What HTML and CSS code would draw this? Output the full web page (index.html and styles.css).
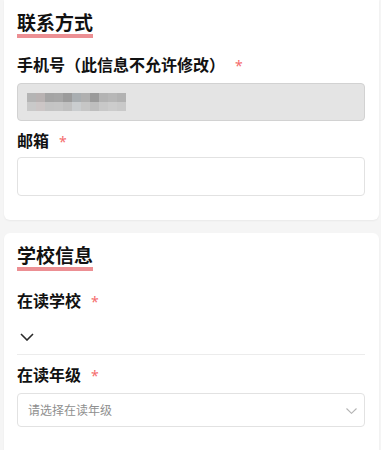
FILE: index.html
```html
<!DOCTYPE html>
<html lang="zh-CN">
<head>
<meta charset="utf-8">
<title>联系方式</title>
<link rel="stylesheet" href="styles.css">
</head>
<body>
<section class="card card-first">
  <h2 class="section-title">联系方式</h2>
  <div class="field field-phone">
    <div class="label">手机号（此信息不允许修改）<span class="req">*</span></div>
    <div class="input input-disabled">
      <svg class="mosaic" width="99" height="18" viewBox="0 0 99 18">
        <rect x="0" y="0" width="9" height="9" fill="#b4b4b4"/>
        <rect x="9" y="0" width="9" height="9" fill="#b8b2b2"/>
        <rect x="18" y="0" width="9" height="9" fill="#a4a4a4"/>
        <rect x="27" y="0" width="9" height="9" fill="#a6a6a6"/>
        <rect x="36" y="0" width="9" height="9" fill="#9b9b9b"/>
        <rect x="45" y="0" width="9" height="9" fill="#a9aeb1"/>
        <rect x="54" y="0" width="9" height="9" fill="#b0b0b0"/>
        <rect x="63" y="0" width="9" height="9" fill="#9a9a9a"/>
        <rect x="72" y="0" width="9" height="9" fill="#b3b3b3"/>
        <rect x="81" y="0" width="9" height="9" fill="#b7b7b7"/>
        <rect x="90" y="0" width="9" height="9" fill="#b2b2b2"/>
        <rect x="0" y="9" width="9" height="9" fill="#c9c9c9"/>
        <rect x="9" y="9" width="9" height="9" fill="#ccc6c6"/>
        <rect x="18" y="9" width="9" height="9" fill="#c4c4c4"/>
        <rect x="27" y="9" width="9" height="9" fill="#c5c5c5"/>
        <rect x="36" y="9" width="9" height="9" fill="#c0c0c0"/>
        <rect x="45" y="9" width="9" height="9" fill="#cacdcf"/>
        <rect x="54" y="9" width="9" height="9" fill="#c6c6c6"/>
        <rect x="63" y="9" width="9" height="9" fill="#bebebe"/>
        <rect x="72" y="9" width="9" height="9" fill="#c8c8c8"/>
        <rect x="81" y="9" width="9" height="9" fill="#cccccc"/>
        <rect x="90" y="9" width="9" height="9" fill="#c9c9c9"/>
      </svg>
    </div>
  </div>
  <div class="field field-email">
    <div class="label">邮箱<span class="req">*</span></div>
    <div class="input input-email"></div>
  </div>
</section>

<section class="card card-second">
  <h2 class="section-title">学校信息</h2>
  <div class="field field-school">
    <div class="label">在读学校<span class="req">*</span></div>
    <div class="picker-row">
      <svg class="chev-dark" width="14" height="8" viewBox="0 0 14 8"><path d="M1 1 L7 7 L13 1" fill="none" stroke="#2b2b2b" stroke-width="1.6"/></svg>
    </div>
  </div>
  <div class="field field-grade">
    <div class="label">在读年级<span class="req">*</span></div>
    <div class="select">
      <span class="placeholder">请选择在读年级</span>
      <svg class="chev-light" width="11" height="6" viewBox="0 0 11 6"><path d="M0.5 0.5 L5.5 5.3 L10.5 0.5" fill="none" stroke="#b4b4b4" stroke-width="1.1"/></svg>
    </div>
  </div>
</section>
</body>
</html>
```

FILE: styles.css
```css
html, body {
  margin: 0;
  padding: 0;
}
body {
  background: #f5f5f5;
  font-family: "Noto Sans CJK SC", "Noto Sans", sans-serif;
  color: #111;
}
.card {
  background: #fff;
  margin: 0 2px 0 4px;
  padding: 11px 14px 24px 13px;
  border-radius: 6px;
  box-shadow: 0 1px 2px rgba(0, 0, 0, 0.05);
}
.card-first {
  border-top-left-radius: 0;
  border-top-right-radius: 0;
}
.card-second {
  margin-top: 13px;
  padding-bottom: 40px;
}
.section-title {
  display: inline-block;
  margin: 0;
  font-size: 19px;
  line-height: 22px;
  font-weight: 700;
  padding-bottom: 1px;
  border-bottom: 4px solid #ec8f93;
}
.field {
  display: flex;
  flex-direction: column;
}
.label {
  font-size: 16px;
  line-height: 22px;
  font-weight: 700;
  color: #111;
}
.req {
  color: #f56c6c;
  font-family: "Noto Sans", sans-serif;
  font-size: 14px;
  font-weight: 400;
  margin-left: 10px;
}
.field-phone { margin-top: 15px; }
.field-phone .label { margin-bottom: 6px; }
.field-email { margin-top: 8px; }
.field-email .label { margin-bottom: 4px; }
.input {
  box-sizing: border-box;
  border-radius: 4px;
  display: flex;
  align-items: center;
}
.input-disabled {
  height: 38px;
  background: #e4e4e4;
  border: 1px solid #d2d2d2;
  padding-left: 9px;
}
.mosaic {
  display: block;
  margin-top: 0;
}
.input-email {
  height: 39px;
  background: #fff;
  border: 1px solid #e2e2e2;
}
.field-school { margin-top: 18px; }
.picker-row {
  margin-top: 5px;
  height: 37px;
  box-sizing: border-box;
  border-bottom: 1px solid #ececec;
  display: flex;
  align-items: center;
  padding-left: 3px;
  padding-top: 1px;
}
.chev-dark { display: block; }
.field-grade { margin-top: 8px; }
.field-grade .label { margin-bottom: 6px; }
.select {
  box-sizing: border-box;
  height: 34px;
  border: 1px solid #e2e2e2;
  border-radius: 4px;
  display: flex;
  align-items: center;
  justify-content: space-between;
  padding: 0 7px 0 10px;
}
.placeholder {
  font-size: 12px;
  line-height: 16px;
  color: #8f8f8f;
}
.chev-light { display: block; margin-top: 1px; }
```
